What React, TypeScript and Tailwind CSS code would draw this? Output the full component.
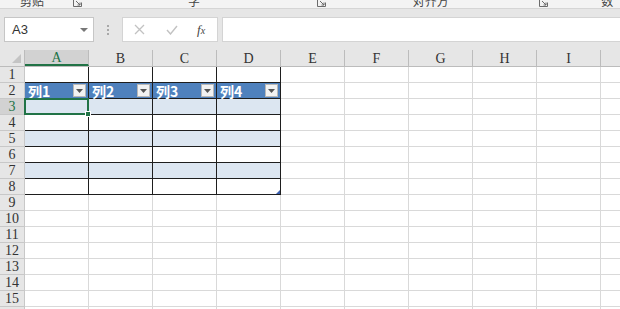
import React from 'react';

const COLS = ['A', 'B', 'C', 'D', 'E', 'F', 'G', 'H', 'I', 'J'];
const ROWS = Array.from({ length: 16 }, (_, i) => i + 1);

const serif = { fontFamily: '"Liberation Serif", "Times New Roman", serif' };
const cjk = { fontFamily: '"Noto Sans CJK SC", "Noto Sans", sans-serif' };

function Launcher() {
    return (
        <svg width="9" height="9" viewBox="0 0 9 9" className="text-[#6b6b6b]">
            <path d="M0.5 0.5h4M0.5 0.5v8h8v-4" fill="none" stroke="currentColor" strokeWidth="1" />
            <path d="M3 3l4 4M7 4.5V7H4.5" fill="none" stroke="currentColor" strokeWidth="1" />
        </svg>
    );
}

function FilterButton() {
    return (
        <div className="w-[13px] h-[13px] bg-[#f2f2f2] border border-[#b8b8b8] flex items-center justify-center">
            <svg width="7" height="4" viewBox="0 0 7 4">
                <path d="M0 0h7L3.5 4z" fill="#555" />
            </svg>
        </div>
    );
}

function Cell({ row, col }: { row: number; col: number }) {
    const inTable = col < 4 && row <= 8;
    const isHeader = inTable && row === 2;
    const banded = inTable && (row === 3 || row === 5 || row === 7);
    const selected = row === 3 && col === 0;

    let cls = 'relative w-[64px] h-full shrink-0 border-r border-b ';
    if (inTable) cls += 'border-[#1e1e1e] ';
    else cls += 'border-[#d9d9d9] ';
    if (isHeader) cls += 'bg-[#4f81bd] ';
    else if (banded) cls += 'bg-[#dce6f1] ';
    else cls += 'bg-white ';

    return (
        <div className={cls}>
            {isHeader && (
                <div className="flex items-center justify-between h-full pl-[3px] pr-[2px]">
                    <span className="text-white text-[14px] font-bold leading-none" style={cjk}>
                        列{col + 1}
                    </span>
                    <FilterButton />
                </div>
            )}
            {selected && (
                <div className="absolute -left-[1px] -top-[1px] -right-[1px] -bottom-[1px] border-2 border-[#217346] z-10">
                    <div className="absolute -right-[4px] -bottom-[4px] w-[6px] h-[6px] bg-[#217346] border border-white" />
                </div>
            )}
            {row === 8 && col === 3 && (
                <svg className="absolute right-0 bottom-0" width="4" height="4" viewBox="0 0 4 4">
                    <path d="M4 0v4H0z" fill="#3a5fb0" />
                </svg>
            )}
        </div>
    );
}

export default function App() {
    return (
        <div className="w-[620px] h-[309px] overflow-hidden bg-[#e6e6e6] select-none">
            {/* Ribbon group labels (cut off) */}
            <div className="h-[9px] bg-[#f3f3f3] border-b border-[#d5d5d5] overflow-hidden relative text-[12px] text-[#444]" style={cjk}>
                <div className="flex items-start -mt-[8px] h-[20px]">
                    <span className="ml-[20px]">剪贴板</span>
                    <span className="ml-[25px] mt-[6px]"><Launcher /></span>
                    <span className="ml-[106px]">字体</span>
                    <span className="ml-[110px] mt-[6px]"><Launcher /></span>
                    <span className="ml-[87px]">对齐方式</span>
                    <span className="ml-[89px] mt-[6px]"><Launcher /></span>
                    <span className="ml-[53px]">数字</span>
                </div>
            </div>

            {/* Formula bar */}
            <div className="flex items-center h-[41px] pt-[0px]">
                <div className="ml-[4px] w-[90px] h-[25px] bg-white border border-[#c6c6c6] flex items-center justify-between pl-[7px] pr-[5px]">
                    <span className="text-[13px] text-[#333]" style={{ fontFamily: '"Liberation Sans", Arial, sans-serif' }}>A3</span>
                    <svg width="8" height="4" viewBox="0 0 8 4">
                        <path d="M0 0h8L4 4z" fill="#777" />
                    </svg>
                </div>
                <div className="w-[28px] flex flex-col items-center gap-[2px]">
                    <div className="w-[2px] h-[2px] bg-[#a8a8a8]" />
                    <div className="w-[2px] h-[2px] bg-[#a8a8a8]" />
                    <div className="w-[2px] h-[2px] bg-[#a8a8a8]" />
                </div>
                <div className="w-[96px] h-[25px] bg-white border border-[#d4d4d4] flex items-center">
                    <svg className="ml-[11px]" width="11" height="11" viewBox="0 0 11 11">
                        <path d="M1 1l9 9M10 1l-9 9" stroke="#c2c2c2" strokeWidth="1.3" />
                    </svg>
                    <svg className="ml-[21px]" width="12" height="10" viewBox="0 0 12 10">
                        <path d="M1 5l3.5 4L11 1" fill="none" stroke="#c2c2c2" strokeWidth="1.4" />
                    </svg>
                    <span className="ml-[19px] text-[13px] italic text-[#444]" style={serif}>
                        f<span className="text-[10px]">x</span>
                    </span>
                </div>
                <div className="ml-[4px] flex-1 h-[25px] bg-white border border-[#d4d4d4] border-r-0" />
            </div>

            {/* Column headers */}
            <div className="flex h-[17px] bg-[#e6e6e6] border-b border-[#bcbcbc]" style={serif}>
                <div className="relative w-[25px] h-full shrink-0 border-r border-[#bcbcbc]">
                    <svg className="absolute right-[3px] bottom-[3px]" width="9" height="9" viewBox="0 0 9 9">
                        <path d="M9 0v9H0z" fill="#c4c4c4" />
                    </svg>
                </div>
                {COLS.map((c, i) => (
                    <div
                        key={c}
                        className={
                            'w-[64px] h-full shrink-0 border-r border-[#bcbcbc] flex items-center justify-center text-[14px] ' +
                            (i === 0
                                ? 'bg-[#d2d2d2] text-[#217346] border-b-2 border-b-[#217346]'
                                : 'text-[#333]')
                        }
                    >
                        {c}
                    </div>
                ))}
            </div>

            {/* Sheet rows */}
            {ROWS.map((r) => (
                <div key={r} className="flex h-[16px]">
                    <div
                        className={
                            'w-[25px] h-full shrink-0 border-r border-b border-[#c8c8c8] flex items-center justify-center text-[14px] ' +
                            (r === 3 ? 'bg-[#d2d2d2] text-[#217346]' : 'bg-[#e6e6e6] text-[#333]')
                        }
                        style={serif}
                    >
                        {r}
                    </div>
                    {COLS.map((c, i) => (
                        <Cell key={c} row={r} col={i} />
                    ))}
                </div>
            ))}
        </div>
    );
}
